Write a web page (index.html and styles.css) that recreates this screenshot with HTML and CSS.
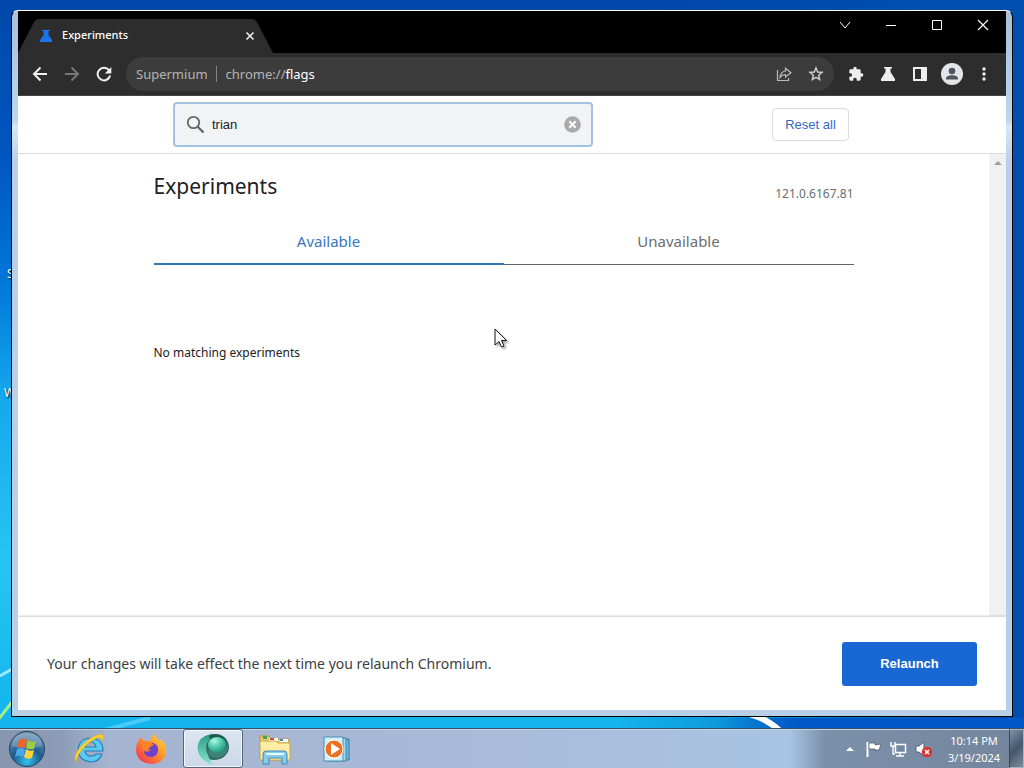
FILE: index.html
```html
<!DOCTYPE html>
<html lang="en">
<head>
<meta charset="utf-8">
<title>Experiments</title>
<link rel="stylesheet" href="styles.css">
</head>
<body>
<div class="desktop">
  <svg class="wallpaper" viewBox="0 0 1024 768" preserveAspectRatio="none" aria-hidden="true">
    <path d="M0 676L12 669" stroke="#c2f4ff" stroke-width="3" opacity=".8"/>
    <path d="M-2 720L12 702" stroke="#a7ee8b" stroke-width="3"/>
    <path d="M105 730L150 718" stroke="#7be2ff" stroke-width="4" opacity=".5"/>
    <path d="M750 714Q767 719 780 731" stroke="#fff" stroke-width="6" fill="none"/>
  </svg>
  <span class="desk-label desk-label-first">S</span>
  <span class="desk-label desk-label-second">W</span>
  <div class="workspace">
    <section class="window">
      <header class="tabstrip">
        <div class="tab">
          <svg class="tab-shape" viewBox="0 0 255 34" preserveAspectRatio="none" aria-hidden="true"><path d="M0 34L16 3Q18 0 21 0H234Q237 0 239 3L255 34Z" fill="#2d2d2d"/></svg>
          <svg class="favicon" width="14" height="14" viewBox="0 0 14 14" aria-hidden="true"><path d="M3 1h8v1H9.500v4L13 11v2H1v-2l3.500-5V2H3z" fill="#1a73e8"/></svg>
          <span class="tab-title">Experiments</span>
          <button class="plain tab-close" aria-label="Close tab"><svg width="10" height="10" viewBox="0 0 10 10"><path d="M1.500 1.500l7 7M8.500 1.500l-7 7" stroke="#eee" stroke-width="1.600"/></svg></button>
        </div>
        <div class="captions">
          <button class="plain caption" aria-label="Tab search"><svg width="12" height="12" viewBox="0 0 12 12"><path d="M1 3l5 6 5-6" stroke="#fff" fill="none"/></svg></button>
          <button class="plain caption" aria-label="Minimize"><svg width="12" height="12" viewBox="0 0 12 12"><path d="M1 6.500h10" stroke="#fff"/></svg></button>
          <button class="plain caption" aria-label="Maximize"><svg width="12" height="12" viewBox="0 0 12 12"><path d="M1.500 1.500h9v9h-9z" stroke="#fff" fill="none"/></svg></button>
          <button class="plain caption" aria-label="Close"><svg width="12" height="12" viewBox="0 0 12 12"><path d="M1 1l10 10M11 1L1 11" stroke="#fff" stroke-width="1.200"/></svg></button>
        </div>
      </header>
      <nav class="toolbar">
        <button class="plain tool" aria-label="Back"><svg width="16" height="16" viewBox="0 0 16 16"><path d="M15 8H2M8.500 1.500L2 8l6.500 6.500" stroke="#f1f1f1" stroke-width="2" fill="none"/></svg></button>
        <button class="plain tool" aria-label="Forward"><svg width="16" height="16" viewBox="0 0 16 16"><path d="M1 8h13M7.500 1.500L14 8l-6.500 6.500" stroke="#777" stroke-width="2" fill="none"/></svg></button>
        <button class="plain tool" aria-label="Reload"><svg width="16" height="16" viewBox="0 0 16 16"><path d="M13 4.300A6.300 6.300 0 1 0 14.100 9.500" stroke="#f1f1f1" stroke-width="2" fill="none"/><path d="M15.300 1v6.500H8.800z" fill="#f1f1f1"/></svg></button>
        <div class="omnibox">
          <span class="brand">Supermium</span>
          <span class="divider"></span>
          <span class="address">chrome://<b>flags</b></span>
          <button class="plain tool share" aria-label="Share"><svg width="16" height="16" viewBox="0 0 16 16"><path d="M1.500 4v10.500h11V12M4 11.500C4.500 7.500 6.500 5.300 9.500 5V2.200L15 6.700 9.500 11V8.500C7 8.500 5.500 9.500 4 11.500z" stroke="#bbb" stroke-width="1.200" fill="none"/></svg></button>
          <button class="plain tool" aria-label="Bookmark"><svg width="16" height="16" viewBox="0 0 16 16"><path d="M8 2l1.700 4 4.300.4-3.300 2.900 1 4.200L8 11.300l-3.700 2.200 1-4.200L2 6.400 6.300 6z" stroke="#ccc" stroke-width="1.500" fill="none"/></svg></button>
        </div>
        <button class="plain tool" aria-label="Extensions"><svg width="16" height="16" viewBox="0 0 24 24"><path d="M20.500 11H19V7a2 2 0 0 0-2-2h-4V3.500a2.500 2.500 0 0 0-5 0V5H4a2 2 0 0 0-2 2v3.800h1.500a2.700 2.700 0 0 1 0 5.400H2V20a2 2 0 0 0 2 2h3.800v-1.500a2.700 2.700 0 0 1 5.400 0V22H17a2 2 0 0 0 2-2v-4h1.500a2.500 2.500 0 0 0 0-5z" fill="#eee"/></svg></button>
        <button class="plain tool" aria-label="Experiments"><svg width="16" height="16" viewBox="0 0 16 16"><path d="M4 1h8v1.500h-1.500V6l4.500 7v2H1v-2l4.500-7V2.500H4z" fill="#eee"/></svg></button>
        <button class="plain tool" aria-label="Side panel"><svg width="16" height="16" viewBox="0 0 16 16"><path d="M1 1h14v14H1zM3 3v10h6V3z" fill="#eee" fill-rule="evenodd"/></svg></button>
        <button class="plain tool" aria-label="Profile"><svg width="22" height="22" viewBox="0 0 22 22"><circle cx="11" cy="11" r="11" fill="#e3e5e8"/><circle cx="11" cy="8" r="3.300" fill="#4f5662"/><path d="M5 16.500v-1C5 13.500 8 12.300 11 12.300s6 1.200 6 3.200v1z" fill="#4f5662"/></svg></button>
        <button class="plain tool" aria-label="Menu"><svg width="16" height="16" viewBox="0 0 16 16"><g fill="#eee"><circle cx="8" cy="3" r="1.700"/><circle cx="8" cy="8" r="1.700"/><circle cx="8" cy="13" r="1.700"/></g></svg></button>
      </nav>
      <div class="search-header">
        <div class="search-inner">
          <div class="search">
            <svg width="20" height="20" viewBox="0 0 20 20" aria-hidden="true"><circle cx="7.500" cy="7.500" r="5.700" stroke="#666" stroke-width="1.800" fill="none"/><path d="M11.500 11.500l6 6" stroke="#666" stroke-width="2.400"/></svg>
            <input class="search-input" type="text" value="trian" aria-label="Search flags">
            <button class="plain clear" aria-label="Clear search"><svg width="17" height="17" viewBox="0 0 17 17"><circle cx="8.500" cy="8.500" r="8.300" fill="#a9a9a9"/><path d="M5.300 5.300l6.400 6.400M11.700 5.300l-6.400 6.400" stroke="#fff" stroke-width="2"/></svg></button>
          </div>
          <button class="reset">Reset all</button>
        </div>
      </div>
      <div class="viewport">
        <main class="page">
          <div class="heading"><h1>Experiments</h1><span class="version">121.0.6167.81</span></div>
          <div class="tabs" role="tablist">
            <button class="flag-tab selected" role="tab" aria-selected="true">Available</button>
            <button class="flag-tab" role="tab" aria-selected="false">Unavailable</button>
          </div>
          <p class="empty">No matching experiments</p>
        </main>
        <div class="scrollbar"><svg width="8" height="5" viewBox="0 0 8 5" aria-hidden="true"><path d="M0 5l4-4 4 4z" fill="#a0a0a0"/></svg></div>
      </div>
      <footer class="restart">
        <p>Your changes will take effect the next time you relaunch Chromium.</p>
        <button class="relaunch">Relaunch</button>
      </footer>
    </section>
  </div>
  <footer class="taskbar">
    <button class="plain start" aria-label="Start"><svg width="38" height="38" viewBox="0 0 38 38">
      <defs><radialGradient id="orb" cx=".5" cy=".85" r=".8"><stop offset="0" stop-color="#35c2ee"/><stop offset=".5" stop-color="#1c5c91"/><stop offset="1" stop-color="#6d93b5"/></radialGradient></defs>
      <circle cx="19" cy="19" r="17.500" fill="url(#orb)" stroke="#263f5b"/>
      <path d="M4 16a15 13 0 0 1 30 0Q19 21 4 16z" fill="#fff" opacity=".22"/>
      <path d="M11 10q4-3 8 0l-2 8q-4-2-8 0z" fill="#ef6427"/><path d="M20 10q4 3 8 1l-2 8q-4 1-8-1z" fill="#9bce42"/><path d="M9 19q4-2 8 0l-2 8q-4-3-8 0z" fill="#4aa7ea"/><path d="M18 19q4 3 8 1l-2 8q-4 2-8-1z" fill="#ffd13c"/>
    </svg></button>
    <button class="plain task" aria-label="Internet Explorer"><svg width="34" height="34" viewBox="0 0 34 34">
      <path d="M31 19H13q1 6 7 5 3 0 4-2h6q-3 8-11 8Q7 29 6 18 7 6 19 6q12 1 12 13zM13 15h11q-1-5-5.500-5T13 15z" fill="#5bc8f2" stroke="#267fb8" stroke-width="1.200" fill-rule="evenodd"/>
      <path d="M5 30Q-1 26 9 14 20 3 29 2q5 1 1 7 0-4-5-3-9 4-15 12-6 7-5 12z" fill="#f6cf39" stroke="#d2a31d" stroke-width=".5"/>
    </svg></button>
    <button class="plain task" aria-label="Firefox"><svg width="34" height="34" viewBox="0 0 34 34">
      <defs><linearGradient id="fox" x1="1" y1="0" x2="0" y2="1"><stop offset="0" stop-color="#ffe34a"/><stop offset=".45" stop-color="#ff9226"/><stop offset="1" stop-color="#ef245f"/></linearGradient></defs>
      <path d="M5 8q1-3 3-3 0 3 3 4h5Q17 4 21 2q1 4 5 7l1-2q6 6 5 13-2 12-15 12Q3 31 2 18q0-6 3-10z" fill="url(#fox)"/>
      <path d="M11 15q2-5 8-4 6 2 5 8-1 6-8 6-6-1-6-6 4 2 7-1-4 0-6-3z" fill="#7040ce"/><path d="M8 10q4-2 8 0l4 3-4 2q-2 4-7 3z" fill="#ff8427"/>
    </svg></button>
    <button class="plain task active" aria-label="Supermium"><svg width="34" height="34" viewBox="0 0 34 34">
      <defs>
        <linearGradient id="leaf" x1="0" y1="0" x2="0" y2="1"><stop offset="0" stop-color="#2c9c84"/><stop offset="1" stop-color="#8be6cd"/></linearGradient>
        <radialGradient id="ball" cx=".35" cy=".25" r=".8"><stop offset="0" stop-color="#b4f7e2"/><stop offset=".5" stop-color="#4cc9aa"/><stop offset="1" stop-color="#1e8f78"/></radialGradient>
      </defs>
      <ellipse cx="18" cy="15" rx="15" ry="13" fill="#2d6b63"/>
      <path d="M14 2.500Q2 5 1.500 15q0 13 16 18-4-4-5-9Q7 14 14 7z" fill="url(#leaf)"/>
      <path d="M13 4Q24-1 31 8q-9-4-16 1z" fill="#1d594f"/>
      <path d="M11 16q5 6 12 4 6-2 9-8 1 11-10 14-9 1-11-10z" fill="#3e8176"/>
      <ellipse cx="21" cy="13" rx="9" ry="8" fill="url(#ball)"/>
    </svg></button>
    <button class="plain task" aria-label="File Explorer"><svg width="34" height="34" viewBox="0 0 34 34">
      <path d="M2 4h9l1 3h19v21H2z" fill="#e9cd67" stroke="#b89b43"/><path d="M5 4h4v3H5z" fill="#43a260"/><path d="M11 6h9v3h-9zM22 7h8v3h-8z" fill="#fff"/><path d="M12 6h4v2h-4z" fill="#d94938"/><path d="M22 7h3v2h-3z" fill="#3d83c4"/><path d="M2 9h16l2 2h12v17H2z" fill="#ffeda4" stroke="#c5aa56"/>
      <path d="M5 32V22q0-3 3-3h18q3 0 3 3v10h-5v-6H11v6z" fill="#88cae9" stroke="#3e8bb4"/><path d="M8 22h18" stroke="#e3faff" stroke-width="2"/>
    </svg></button>
    <button class="plain task" aria-label="Media Player"><svg width="34" height="34" viewBox="0 0 34 34">
      <path d="M11 7h18v21H11z" fill="#6db9dd" stroke="#34799d"/><path d="M8 6h18v23H8z" fill="#aad8eb" stroke="#3a85aa"/><path d="M4 5h19v24H4z" fill="#d5eff8" stroke="#4390b3"/><circle cx="14" cy="17" r="9" fill="#ee7021" stroke="#fff"/><path d="M11 11l9 6-9 6z" fill="#fff"/>
    </svg></button>
    <div class="tray">
      <svg width="8" height="5" viewBox="0 0 8 5" aria-hidden="true"><path d="M0 5l4-4 4 4z" fill="#fff"/></svg>
      <svg width="16" height="18" viewBox="0 0 16 18" aria-hidden="true"><path d="M1.500 2v15" stroke="#fff" stroke-width="2"/><path d="M3 3h6v2l6-1-2 6H9V9H3z" fill="#fff" stroke="#435166" stroke-width=".7"/></svg>
      <svg width="17" height="18" viewBox="0 0 17 18" aria-hidden="true"><path d="M5.500 4.500h10v8h-10zM10 13v3M6 16h8" fill="#7187a0" stroke="#fff" stroke-width="1.500"/><path d="M1 2v4h4V2M3 6v8h2" stroke="#fff" stroke-width="1.400" fill="none"/></svg>
      <svg width="18" height="18" viewBox="0 0 18 18" aria-hidden="true"><path d="M1 6h3l5-4v14l-5-4H1z" fill="#fff" stroke="#536375"/><circle cx="12" cy="12" r="5.300" fill="#d83632"/><path d="M10 10l4 4M14 10l-4 4" stroke="#fff" stroke-width="1.600"/></svg>
      <div class="clock"><span>10:14 PM</span><span>3/19/2024</span></div>
    </div>
    <button class="plain show-desktop" aria-label="Show desktop"></button>
  </footer>
  <svg class="cursor" width="14" height="22" viewBox="0 0 14 22" aria-hidden="true"><path d="M1 1v16l4-3.500 2.500 5.500 2.500-1-2.500-5.500h5z" fill="#fff" stroke="#111"/></svg>
</div>
</body>
</html>
```
FILE: styles.css
```css
* { box-sizing: border-box; }
body { margin: 0; font-family: "Noto Sans", "Open Sans", sans-serif; color: #202124; }
button { font: inherit; }
h1, p { margin: 0; }
svg { display: block; flex: none; }
.plain { display: flex; align-items: center; justify-content: center; padding: 0; border: 0; background: none; }

.desktop {
  position: relative;
  display: flex;
  flex-direction: column;
  height: 100vh;
  overflow: hidden;
  background:
    linear-gradient(90deg, #0057c800 70%, #0057c8 78%) bottom / 100% 50px no-repeat,
    linear-gradient(90deg, #0050b000 60%, #004fae 98%),
    linear-gradient(#0048a9 0, #0057c0 160px, #0077d8 280px, #16a9ee 400px, #26c5f3 560px, #13b4ed 728px);
}
.wallpaper { position: absolute; width: 100%; height: 100%; }
.desk-label { position: absolute; left: 4px; color: #fff; font-size: 12px; line-height: 16px; text-shadow: 1px 1px 2px #000; }
.desk-label-first { top: 266px; left: 7px; }
.desk-label-second { top: 385px; }

.workspace { position: relative; flex: 1; display: flex; min-height: 0; padding: 10px 11px 11px 11px; }
.window {
  flex: 1;
  display: flex;
  flex-direction: column;
  min-width: 0;
  padding: 0 6px 6px;
  border: 1px solid #000;
  border-top-color: #fff;
  border-radius: 7px 7px 0 0;
  background: linear-gradient(#a9bfdd, #b9d9ea 110px, #d6e9f4 115px, #bbcfe8 150px, #b8cfe8);
}
.tabstrip { display: flex; justify-content: space-between; align-items: flex-start; height: 42px; background: #000; }
.tab { position: relative; display: flex; align-items: center; align-self: flex-end; width: 255px; height: 34px; padding: 0 18px 0 21px; }
.tab-shape { position: absolute; inset: 0; width: 100%; height: 100%; }
.favicon, .tab-title, .tab-close { position: relative; }
.tab-title { flex: 1; margin-left: 9px; color: #fff; font-size: 11px; line-height: 16px; padding-bottom: 2px; font-weight: 500; }
.tab-close { width: 10px; }
.captions { display: flex; }
.caption { width: 46px; height: 28px; }

.toolbar { display: flex; align-items: center; gap: 8px; min-width: 0; height: 43px; padding: 0 10px; background: #2d2d2d; border-bottom: 1px solid #454545; }
.tool { width: 24px; height: 32px; flex: none; }
.omnibox { display: flex; align-items: center; flex: 1; min-width: 0; height: 34px; margin: 0 2px; padding: 0 6px 0 10px; border-radius: 17px; background: #3c3c3c; color: #b5b5b5; font-size: 13px; }
.divider { width: 1px; height: 16px; margin: 0 9px 0 8px; background: #858585; }
.address { flex: 1; }
.address b { color: #fff; font-weight: 400; }
.share { margin-right: 8px; }

.search-header { height: 58px; background: #fff; border-bottom: 1px solid #dadce0; }
.search-inner { display: flex; align-items: center; justify-content: space-between; width: 700px; max-width: 100%; height: 57px; margin: 0 auto; padding: 0 13px 0 11px; }
.search { display: flex; align-items: center; width: 420px; height: 45px; padding: 0 10px 0 11px; border: 2px solid #a3c3e4; border-radius: 4px; background: #f1f3f4; }
.search-input { flex: 1; min-width: 0; margin: 0 0 0 6px; padding: 0; border: 0; outline: 0; background: none; color: #202124; font: 13px "Liberation Sans", Arial, sans-serif; }
.clear { width: 17px; }
.reset { width: 77px; height: 33px; padding: 0; border: 1px solid #dadce0; border-radius: 4px; background: #fff; color: #3569c9; font: 13px "Liberation Sans", Arial, sans-serif; }

.viewport { flex: 1; display: flex; min-height: 0; background: #fff; }
.page { flex: 1; width: 100%; max-width: 700px; margin: 0 auto; }
.heading { display: flex; align-items: flex-end; justify-content: space-between; padding-top: 16px; }
h1 { font-size: 21px; line-height: 32px; font-weight: 400; }
.version { color: #6a6d71; font-size: 12px; line-height: 16px; }
.tabs { display: flex; margin-top: 16px; }
.flag-tab { flex: 1; height: 47px; padding: 0; border: 0; border-bottom: 1px solid #606367; background: none; color: #6a6d71; font-size: 15px; }
.flag-tab.selected { border-bottom: 2px solid #3278b8; color: #3975bd; }
.empty { margin-top: 80px; font-size: 12px; line-height: 16px; }
.scrollbar { display: flex; justify-content: center; width: 17px; padding-top: 6px; background: #f1f1f1; }
.restart { display: flex; align-items: center; justify-content: space-between; height: 94px; padding: 0 29px; border-top: 1px solid #dadce0; background: #fff; box-shadow: 0 -1px 1px #0001; color: #3c4043; font-size: 14px; }
.relaunch { width: 135px; height: 44px; border: 0; border-radius: 3px; background: #1967d2; color: #fff; font: bold 13px "Liberation Sans", Arial, sans-serif; }

.taskbar { position: relative; display: flex; align-items: center; height: 40px; border-top: 1px solid #31516d; background: linear-gradient(90deg, #8796ae 0, #8d9cb6 60px, #a5b4d0 110px, #a8bad8 450px, #a8c4e2 790px, #7b90aa 825px, #74869d 1005px); box-shadow: inset 0 1px #c5d3e2; }
.start { width: 54px; height: 39px; margin-right: 5px; }
.task { width: 60px; height: 39px; margin-right: 2px; }
.task.active { border: 1px solid #576479; border-radius: 3px; background: linear-gradient(#dde6f1, #cbd8e9); box-shadow: inset 0 0 0 1px #f5f9ff; }
.tray { display: flex; align-items: center; gap: 8px; margin-left: auto; }
.tray > svg:first-child { margin-right: 4px; }
.clock { display: flex; flex-direction: column; align-items: center; width: 66px; color: #fff; font-size: 11px; line-height: 17px; }
.show-desktop { width: 15px; height: 39px; margin-left: 2px; border: 1px solid #a6b4c2; border-left-color: #39475a; background: linear-gradient(135deg, #8193a6, #44566b 50%, #7d8d9e); }
.cursor { position: absolute; left: 494px; top: 328px; filter: drop-shadow(2px 2px 1px #0005); }
```
